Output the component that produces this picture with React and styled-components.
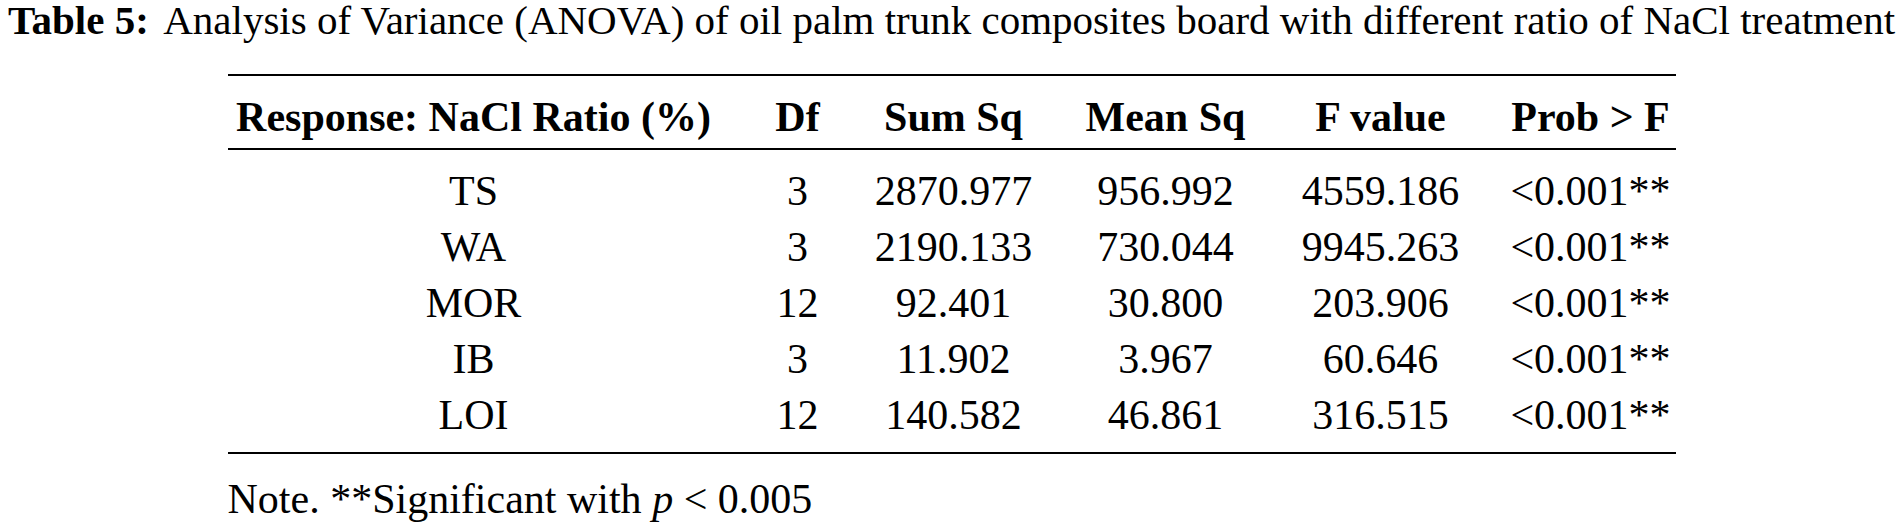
import React from "react";
import styled, { createGlobalStyle } from "styled-components";

const GlobalStyle = createGlobalStyle`
  html, body {
    margin: 0;
    padding: 0;
    background: #ffffff;
  }
  body {
    font-family: "Liberation Serif", "Times New Roman", serif;
    color: #000000;
    overflow: hidden;
  }
`;

const COLUMNS = "492px 156px 156px 268px 162px 214px";

const Page = styled.main`
  display: flex;
  flex-direction: column;
  align-items: center;
  width: 1903px;
  height: 531px;
  box-sizing: border-box;
`;

const Caption = styled.h1`
  margin: 0;
  font-size: 41px;
  line-height: 40px;
  font-weight: 400;
  white-space: nowrap;
  text-align: center;
`;

const CaptionLabel = styled.span`
  font-weight: 700;
  margin-right: 0.35em;
`;

const Table = styled.div`
  width: 1448px;
  margin-top: 34px;
  display: flex;
  flex-direction: column;
`;

const HeadRow = styled.div`
  display: grid;
  grid-template-columns: ${COLUMNS};
  border-top: 2px solid #000;
  border-bottom: 2px solid #000;
  padding: 18px 0 8px;
  font-size: 42px;
  line-height: 46px;
  font-weight: 700;
`;

const Body = styled.div`
  display: flex;
  flex-direction: column;
  padding: 12.5px 0 9.5px;
  border-bottom: 2px solid #000;
`;

const Row = styled.div`
  display: grid;
  grid-template-columns: ${COLUMNS};
  height: 56px;
  font-size: 42px;
  line-height: 56px;
`;

const Cell = styled.div`
  display: flex;
  justify-content: center;
  white-space: nowrap;
  padding-left: ${(p) => (p.$last ? "44px" : "0")};
`;

const Stars = styled.span`
  vertical-align: 4px;
`;

const Note = styled.p`
  width: 1448px;
  margin: 25px 0 0;
  font-size: 42px;
  line-height: 40px;
  white-space: nowrap;
`;

const Var = styled.i`
  font-style: italic;
`;

const headers = ["Response: NaCl Ratio (%)", "Df", "Sum Sq", "Mean Sq", "F value", "Prob > F"];

const rows = [
  ["TS", "3", "2870.977", "956.992", "4559.186"],
  ["WA", "3", "2190.133", "730.044", "9945.263"],
  ["MOR", "12", "92.401", "30.800", "203.906"],
  ["IB", "3", "11.902", "3.967", "60.646"],
  ["LOI", "12", "140.582", "46.861", "316.515"],
];

export default function App() {
  return (
    <>
      <GlobalStyle />
      <Page>
        <Caption>
          <CaptionLabel>Table 5:</CaptionLabel>
          Analysis of Variance (ANOVA) of oil palm trunk composites board with different ratio of NaCl treatment
        </Caption>
        <Table>
          <HeadRow>
            {headers.map((h, i) => (
              <Cell key={h} $last={i === headers.length - 1}>
                {h}
              </Cell>
            ))}
          </HeadRow>
          <Body>
            {rows.map((r) => (
              <Row key={r[0]}>
                {r.map((v, i) => (
                  <Cell key={i}>{v}</Cell>
                ))}
                <Cell $last>
                  &lt;0.001<Stars>**</Stars>
                </Cell>
              </Row>
            ))}
          </Body>
        </Table>
        <Note>
          Note. **Significant with <Var>p</Var> &lt; 0.005
        </Note>
      </Page>
    </>
  );
}
